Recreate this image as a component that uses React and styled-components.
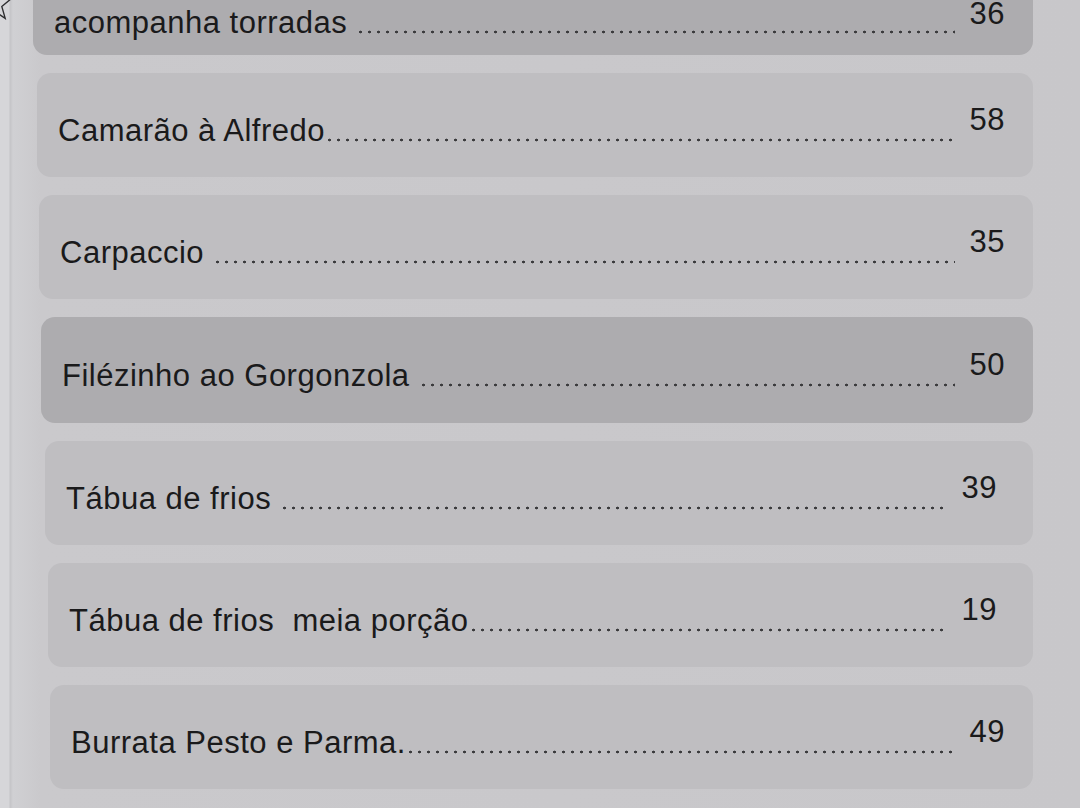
import styled, { createGlobalStyle } from "styled-components";

const GlobalStyle = createGlobalStyle`
  html, body {
    margin: 0;
    padding: 0;
    height: 100%;
    overflow: hidden;
  }
  body {
    background: linear-gradient(
      to right,
      #d6d6d9 0,
      #d6d6d9 9px,
      #c4c4c7 10px,
      #d0d0d3 13px,
      #cac9cc 40px,
      #c8c7ca 100%
    );
    font-family: "Liberation Sans", Arial, sans-serif;
  }
`;

const items = [
  { name: "acompanha torradas ", price: "36", tone: "dark", tail: true },
  { name: "Camarão à Alfredo", price: "58" },
  { name: "Carpaccio ", price: "35" },
  { name: "Filézinho ao Gorgonzola ", price: "50", tone: "dark" },
  { name: "Tábua de frios ", price: "39", inset: 36 },
  { name: "Tábua de frios  meia porção", price: "19", inset: 36 },
  { name: "Burrata Pesto e Parma.", price: "49" },
];

const Menu = () => {
  return (
    <Page>
      <Star viewBox="0 0 40 40">
        <path d="M20 2 L25 15 L39 15 L28 24 L32 38 L20 30 L8 38 L12 24 L1 15 L15 15 Z" />
      </Star>
      <List>
        {items.map((item, i) => (
          <Card
            key={i}
            $indent={[0, 4, 6, 8, 12, 15, 17][i]}
            $tone={item.tone}
            $tail={item.tail}
            $inset={item.inset}
          >
            <Line>
              <Name>{item.name}</Name>
              <Leader />
              <Price $tail={item.tail}>{item.price}</Price>
            </Line>
          </Card>
        ))}
      </List>
    </Page>
  );
};

export default function App() {
  return (
    <>
      <GlobalStyle />
      <Menu />
    </>
  );
}

const Page = styled.div`
  position: relative;
  width: 1080px;
  height: 808px;
  overflow: hidden;
  padding: 0 47px 0 33px;
  box-sizing: border-box;
`;

const Star = styled.svg`
  position: absolute;
  left: -22px;
  top: -14px;
  width: 34px;
  height: 34px;
  fill: none;
  stroke: #2e2e30;
  stroke-width: 1.6;
  stroke-linejoin: miter;
`;

const List = styled.div`
  display: flex;
  flex-direction: column;
  gap: 18px;
  margin-top: -49px;
`;

const Card = styled.div`
  display: flex;
  align-items: ${(p) => (p.$tail ? "flex-end" : "center")};
  height: ${(p) => (p.$tone === "dark" && !p.$tail ? 106 : 104)}px;
  margin-left: ${(p) => p.$indent}px;
  padding: 0 ${(p) => p.$inset || 28}px
    ${(p) => (p.$tail ? 15 : 0)}px 21px;
  box-sizing: border-box;
  border-radius: 14px;
  background: ${(p) => (p.$tone === "dark" ? "#adacaf" : "#bfbec1")};
`;

const Line = styled.div`
  display: flex;
  align-items: flex-end;
  width: 100%;
  font-size: 31px;
  line-height: 35px;
  letter-spacing: 0.5px;
  color: #1a1a1b;
`;

const Name = styled.span`
  white-space: pre;
`;

const Leader = styled.span`
  flex: 1;
  height: 4px;
  margin: 0 15px 6px 0;
  background-image: radial-gradient(
    circle at center,
    #3a3a3c 1.1px,
    rgba(58, 58, 60, 0) 1.7px
  );
  background-size: 9px 4px;
  background-repeat: repeat-x;
`;

const Price = styled.span`
  margin-bottom: ${(p) => (p.$tail ? 9 : 11)}px;
`;
